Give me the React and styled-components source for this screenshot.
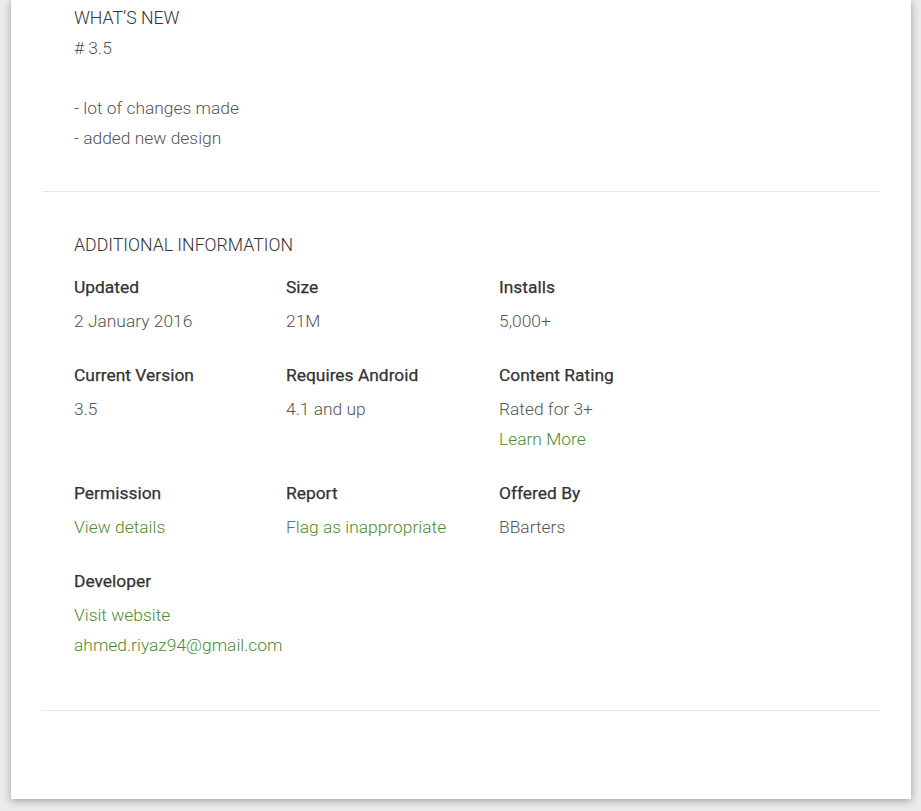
import React from "react";
import styled, { createGlobalStyle } from "styled-components";

const GlobalStyle = createGlobalStyle`
  html, body {
    margin: 0;
    padding: 0;
    background: #ebebeb;
    font-family: Roboto, "Liberation Sans", Arial, sans-serif;
  }
`;

const Card = styled.div`
  width: 900px;
  margin: 0 10px 12px 11px;
  background: #fff;
  box-shadow: 0 2px 8px rgba(0, 0, 0, 0.32);
  padding-bottom: 88px;
`;

const Section = styled.section`
  margin: 0 31px;
  padding: ${(p) => p.$pad || "39px 32px"};
  border-bottom: 1px solid #e8e8e8;
`;

const Heading = styled.div`
  font-size: 17.7px;
  font-weight: 300;
  line-height: 30px;
  color: #333;
  text-transform: uppercase;
`;

const Text = styled.div`
  font-size: 17.4px;
  font-weight: 300;
  line-height: 30px;
  color: #555;
  min-height: 30px;
`;

const Grid = styled.div`
  display: grid;
  grid-template-columns: 212px 213px 212px;
  row-gap: 27px;
  margin-top: 15px;
`;

const Cell = styled.div`
  display: flex;
  flex-direction: column;
`;

const Label = styled.div`
  font-size: 17.4px;
  font-weight: 400;
  line-height: 24px;
  color: #333;
  margin-bottom: 7px;
  -webkit-text-stroke: 0.25px #333;
`;

const Value = styled.div`
  font-size: 17.4px;
  font-weight: 300;
  line-height: 30px;
  color: ${(p) => (p.$link ? "#4f8a32" : "#555")};
`;

const info = [
  { label: "Updated", values: [{ t: "2 January 2016" }] },
  { label: "Size", values: [{ t: "21M" }] },
  { label: "Installs", values: [{ t: "5,000+" }] },
  { label: "Current Version", values: [{ t: "3.5" }] },
  { label: "Requires Android", values: [{ t: "4.1 and up" }] },
  {
    label: "Content Rating",
    values: [{ t: "Rated for 3+" }, { t: "Learn More", link: true }],
  },
  { label: "Permission", values: [{ t: "View details", link: true }] },
  { label: "Report", values: [{ t: "Flag as inappropriate", link: true }] },
  { label: "Offered By", values: [{ t: "BBarters" }] },
  {
    label: "Developer",
    values: [
      { t: "Visit website", link: true },
      { t: "ahmed.riyaz94@gmail.com", link: true },
    ],
  },
];

export default function App() {
  return (
    <>
      <GlobalStyle />
      <Card>
        <Section $pad="3px 32px 38px">
          <Heading>What’s New</Heading>
          <Text># 3.5</Text>
          <Text />
          <Text>- lot of changes made</Text>
          <Text>- added new design</Text>
        </Section>
        <Section $pad="38px 32px 50px">
          <Heading>Additional Information</Heading>
          <Grid>
            {info.map((item) => (
              <Cell key={item.label}>
                <Label>{item.label}</Label>
                {item.values.map((v) => (
                  <Value key={v.t} $link={v.link}>
                    {v.t}
                  </Value>
                ))}
              </Cell>
            ))}
          </Grid>
        </Section>
      </Card>
    </>
  );
}
